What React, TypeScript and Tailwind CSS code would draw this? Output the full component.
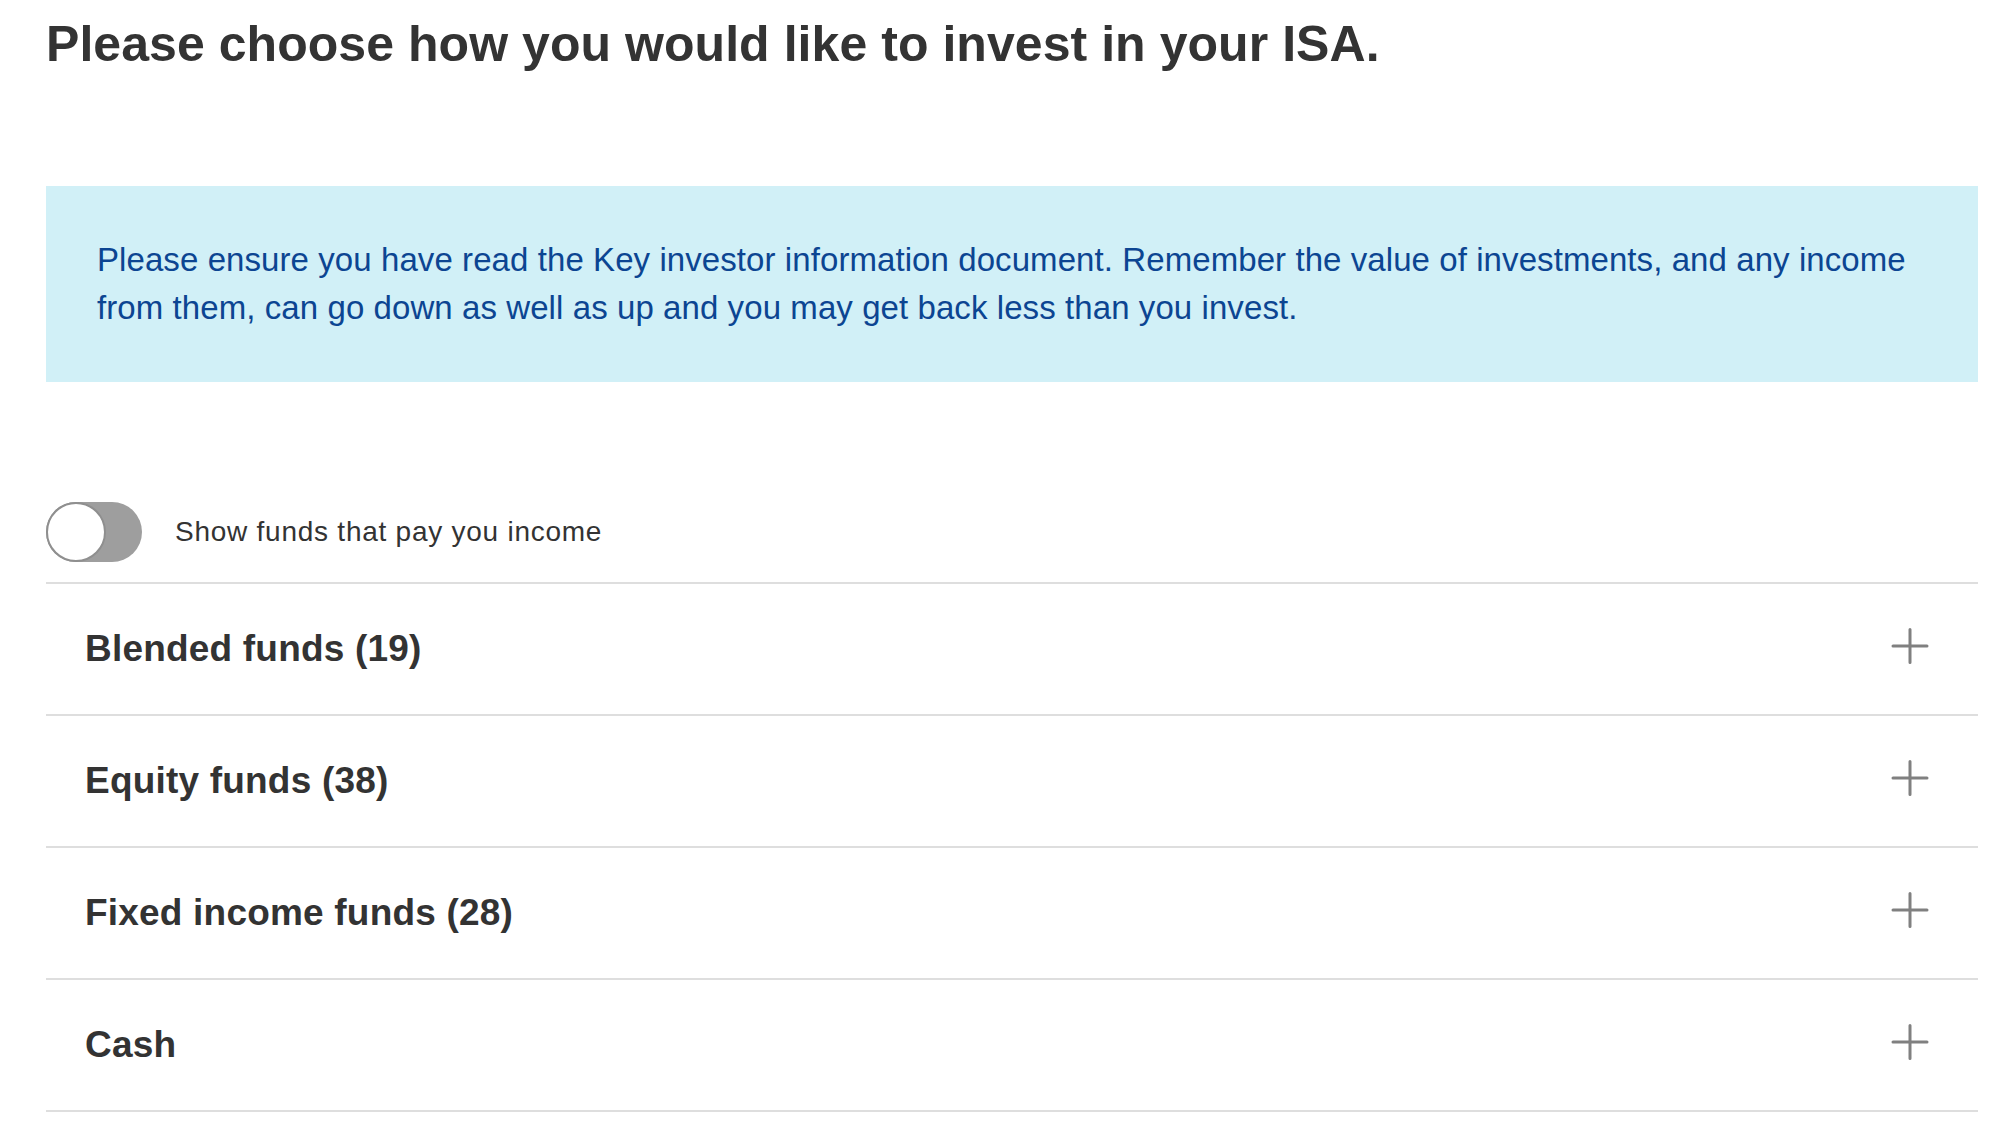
import React from "react";

const rows = [
  "Blended funds (19)",
  "Equity funds (38)",
  "Fixed income funds (28)",
  "Cash",
];

function PlusIcon() {
  return (
    <svg className="mb-[6px]" width="38" height="38" viewBox="0 0 38 38" fill="none" aria-hidden="true">
      <path d="M19 2.5V35.5M2 19H36" stroke="#808080" strokeWidth="3" strokeLinecap="round" />
    </svg>
  );
}

export default function App() {
  return (
    <div
      className="min-h-screen bg-white pl-[46px] pr-[30px] text-[#333333]"
      style={{ fontFamily: '"Liberation Sans", Arial, Helvetica, sans-serif' }}
    >
      <h1 className="pt-[14px] text-[50px] leading-[60px] font-bold tracking-[0.05px] text-[#333333]">
        Please choose how you would like to invest in your ISA.
      </h1>

      <div className="mt-[112px] bg-[#d1f0f7] pl-[51px] pr-[52px] py-[50px]">
        <p className="text-[33px] leading-[48px] tracking-[0.08px] text-[#0c4592]">
          Please ensure you have read the Key investor information document. Remember the value of
          investments, and any income from them, can go down as well as up and you may get back less
          than you invest.
        </p>
      </div>

      <div className="mt-[120px] flex items-center pb-[20px]">
        <div className="relative h-[60px] w-[96px] rounded-full bg-[#9e9e9e]">
          <div className="absolute left-0 top-0 h-[60px] w-[60px] rounded-full border-2 border-[#8f8f8f] bg-white" />
        </div>
        <span className="ml-[33px] text-[28px] leading-[36px] tracking-[0.75px] text-[#333333]">
          Show funds that pay you income
        </span>
      </div>

      <div className="border-b-2 border-[#dedede]">
        {rows.map((r) => (
          <div
            key={r}
            className="flex h-[132px] items-center justify-between border-t-2 border-[#dedede] pl-[39px] pr-[49px]"
          >
            <span className="text-[37px] leading-[44px] font-bold tracking-[0.2px] text-[#333333]">
              {r}
            </span>
            <PlusIcon />
          </div>
        ))}
      </div>
    </div>
  );
}
